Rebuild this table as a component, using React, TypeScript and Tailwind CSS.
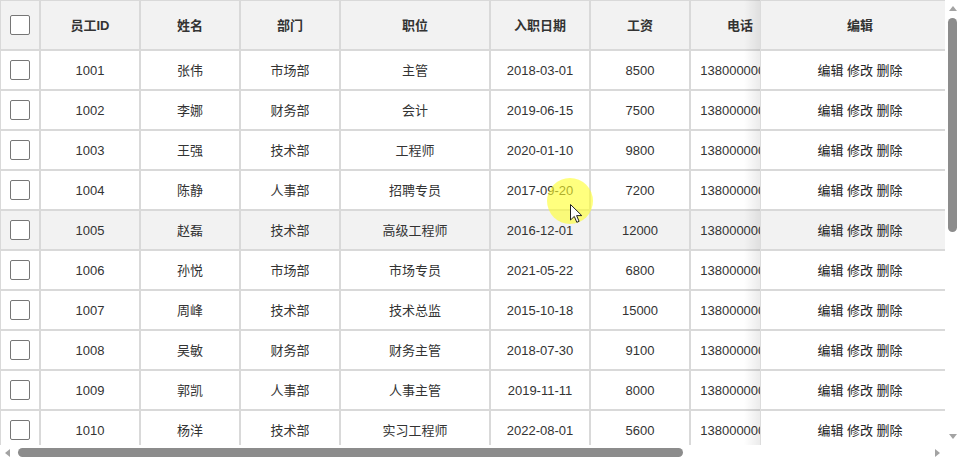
import React from "react";

type Row = {
  id: number;
  name: string;
  dept: string;
  pos: string;
  date: string;
  salary: number;
  email: string;
  addr: string;
};

const rows: Row[] = [
  { id: 1001, name: "张伟", dept: "市场部", pos: "主管", date: "2018-03-01", salary: 8500, email: "zhangwei@example.com", addr: "北京市朝阳区" },
  { id: 1002, name: "李娜", dept: "财务部", pos: "会计", date: "2019-06-15", salary: 7500, email: "lina@example.com", addr: "上海市浦东新区" },
  { id: 1003, name: "王强", dept: "技术部", pos: "工程师", date: "2020-01-10", salary: 9800, email: "wangqiang@example.com", addr: "广州市天河区" },
  { id: 1004, name: "陈静", dept: "人事部", pos: "招聘专员", date: "2017-09-20", salary: 7200, email: "chenjing@example.com", addr: "深圳市南山区" },
  { id: 1005, name: "赵磊", dept: "技术部", pos: "高级工程师", date: "2016-12-01", salary: 12000, email: "zhaolei@example.com", addr: "杭州市西湖区" },
  { id: 1006, name: "孙悦", dept: "市场部", pos: "市场专员", date: "2021-05-22", salary: 6800, email: "sunyue@example.com", addr: "成都市武侯区" },
  { id: 1007, name: "周峰", dept: "技术部", pos: "技术总监", date: "2015-10-18", salary: 15000, email: "zhoufeng@example.com", addr: "南京市鼓楼区" },
  { id: 1008, name: "吴敏", dept: "财务部", pos: "财务主管", date: "2018-07-30", salary: 9100, email: "wumin@example.com", addr: "武汉市洪山区" },
  { id: 1009, name: "郭凯", dept: "人事部", pos: "人事主管", date: "2019-11-11", salary: 8000, email: "guokai@example.com", addr: "西安市雁塔区" },
  { id: 1010, name: "杨洋", dept: "技术部", pos: "实习工程师", date: "2022-08-01", salary: 5600, email: "yangyang@example.com", addr: "苏州市工业园区" },
  { id: 1011, name: "刘洋", dept: "市场部", pos: "市场经理", date: "2017-04-12", salary: 11000, email: "liuyang@example.com", addr: "天津市和平区" },
  { id: 1012, name: "黄丽", dept: "财务部", pos: "出纳", date: "2020-09-03", salary: 6500, email: "huangli@example.com", addr: "重庆市渝中区" },
];

function Box() {
  return <div className="mx-auto h-[20px] w-[20px] rounded-[2px] border border-[#767676] bg-white" />;
}

const cell = "border-2 border-[#d9d9d9] text-center whitespace-nowrap overflow-hidden p-0";
const tcell = "border-2 border-[#d9d9d9] text-center whitespace-nowrap overflow-hidden px-0 pb-0 pt-[2px]";
const rcell = "border-y-2 border-x-0 border-[#d9d9d9] text-center whitespace-nowrap px-0 pb-0 pt-[2px]";

function Tri({ dir }: { dir: "up" | "down" | "left" | "right" }) {
  const pts =
    dir === "up"
      ? "0,5 4,0 8,5"
      : dir === "down"
      ? "0,0 8,0 4,5"
      : dir === "left"
      ? "5,0 5,8 0,4"
      : "0,0 0,8 5,4";
  const w = dir === "up" || dir === "down" ? 8 : 5;
  const h = dir === "up" || dir === "down" ? 5 : 8;
  return (
    <svg width={w} height={h} viewBox={`0 0 ${w} ${h}`}>
      <polygon points={pts} fill="#a3a3a3" />
    </svg>
  );
}

export default function App() {
  return (
    <div
      className="relative flex h-[460px] w-[960px] flex-col bg-white text-[13px] text-[#333]"
      style={{ fontFamily: '"Liberation Sans", Arial, "Noto Sans CJK SC", sans-serif' }}
    >
      <div className="flex h-[445px] w-[960px]">
        {/* scrolled part of the table */}
        <div className="h-[445px] w-[760px] overflow-hidden">
          <table className="-ml-px -mt-px w-[1120px] table-fixed border-collapse">
            <colgroup>
              <col className="w-[40px]" />
              <col className="w-[100px]" />
              <col className="w-[100px]" />
              <col className="w-[100px]" />
              <col className="w-[150px]" />
              <col className="w-[100px]" />
              <col className="w-[100px]" />
              <col className="w-[100px]" />
              <col className="w-[180px]" />
              <col className="w-[150px]" />
            </colgroup>
            <thead>
              <tr className="h-[50px] bg-[#f2f2f2] font-bold">
                <th className={cell}><Box /></th>
                <th className={tcell}>员工ID</th>
                <th className={tcell}>姓名</th>
                <th className={tcell}>部门</th>
                <th className={tcell}>职位</th>
                <th className={tcell}>入职日期</th>
                <th className={tcell}>工资</th>
                <th className={tcell}>电话</th>
                <th className={tcell}>邮箱</th>
                <th className={tcell}>地址</th>
              </tr>
            </thead>
            <tbody>
              {rows.map((r) => {
                const bg = r.id === 1005 ? "bg-[#f2f2f2]" : "bg-white";
                return (
                  <tr key={r.id} className={`h-[40px] ${bg}`}>
                    <td className={cell}><Box /></td>
                    <td className={tcell}>{r.id}</td>
                    <td className={tcell}>{r.name}</td>
                    <td className={tcell}>{r.dept}</td>
                    <td className={tcell}>{r.pos}</td>
                    <td className={tcell}>{r.date}</td>
                    <td className={tcell}>{r.salary}</td>
                    <td className={tcell}>{"138000000" + String(r.id - 1000).padStart(2, "0")}</td>
                    <td className={tcell}>{r.email}</td>
                    <td className={tcell}>{r.addr}</td>
                  </tr>
                );
              })}
            </tbody>
          </table>
        </div>
        {/* fixed right column */}
        <div className="relative h-[445px] w-[185px] border-l border-[#dcdcdc]">
          <div className="pointer-events-none absolute top-0 bottom-0 left-[-17px] w-[16px] bg-gradient-to-r from-transparent to-[rgba(0,0,0,0.08)]" />
          <div className="h-[445px] w-[184px] overflow-hidden">
            <table className="-mt-px w-[184px] table-fixed border-collapse">
              <thead>
                <tr className="h-[50px] bg-[#f2f2f2] font-bold">
                  <th className={rcell}><span className="pl-[14px]">编辑</span></th>
                </tr>
              </thead>
              <tbody>
                {rows.map((r) => {
                  const bg = r.id === 1005 ? "bg-[#f2f2f2]" : "bg-white";
                  return (
                    <tr key={r.id} className={`h-[40px] ${bg}`}>
                      <td className={rcell}>
                        <span className="pl-[14px] text-[#222]">编辑 修改 删除</span>
                      </td>
                    </tr>
                  );
                })}
              </tbody>
            </table>
          </div>
        </div>
        {/* vertical scrollbar */}
        <div className="flex h-[445px] w-[15px] flex-col items-center bg-white">
          <div className="flex h-[15px] items-center justify-center pt-[1px]">
            <Tri dir="up" />
          </div>
          <div className="flex-1 px-[3px] pt-[3px]">
            <div className="h-[214px] w-[9px] rounded-full bg-[#8c8c8c]" />
          </div>
          <div className="flex h-[15px] items-center justify-center pb-[3px]">
            <Tri dir="down" />
          </div>
        </div>
      </div>
      {/* horizontal scrollbar */}
      <div className="flex h-[15px] w-[960px]">
        <div className="flex h-[15px] w-[945px] items-center bg-white">
          <div className="flex w-[15px] items-center justify-center">
            <Tri dir="left" />
          </div>
          <div className="flex-1 pl-[3px]">
            <div className="h-[9px] w-[665px] rounded-full bg-[#8c8c8c]" />
          </div>
          <div className="flex w-[15px] items-center justify-center">
            <Tri dir="right" />
          </div>
        </div>
        <div className="h-[15px] w-[15px] bg-white" />
      </div>
      {/* cursor highlight */}
      <div className="pointer-events-none absolute left-[547px] top-[178px] h-[46px] w-[46px] rounded-full bg-[rgba(255,255,40,0.6)]" />
      <svg className="pointer-events-none absolute left-[570px] top-[204px]" width="13" height="20" viewBox="0 0 13 20">
        <path d="M0.5 0.5 L0.5 16 L4.3 12.4 L6.8 18.3 L9.1 17.3 L6.6 11.6 L11.8 11.6 Z" fill="white" stroke="#222" strokeWidth="1" strokeLinejoin="round" />
      </svg>
    </div>
  );
}
